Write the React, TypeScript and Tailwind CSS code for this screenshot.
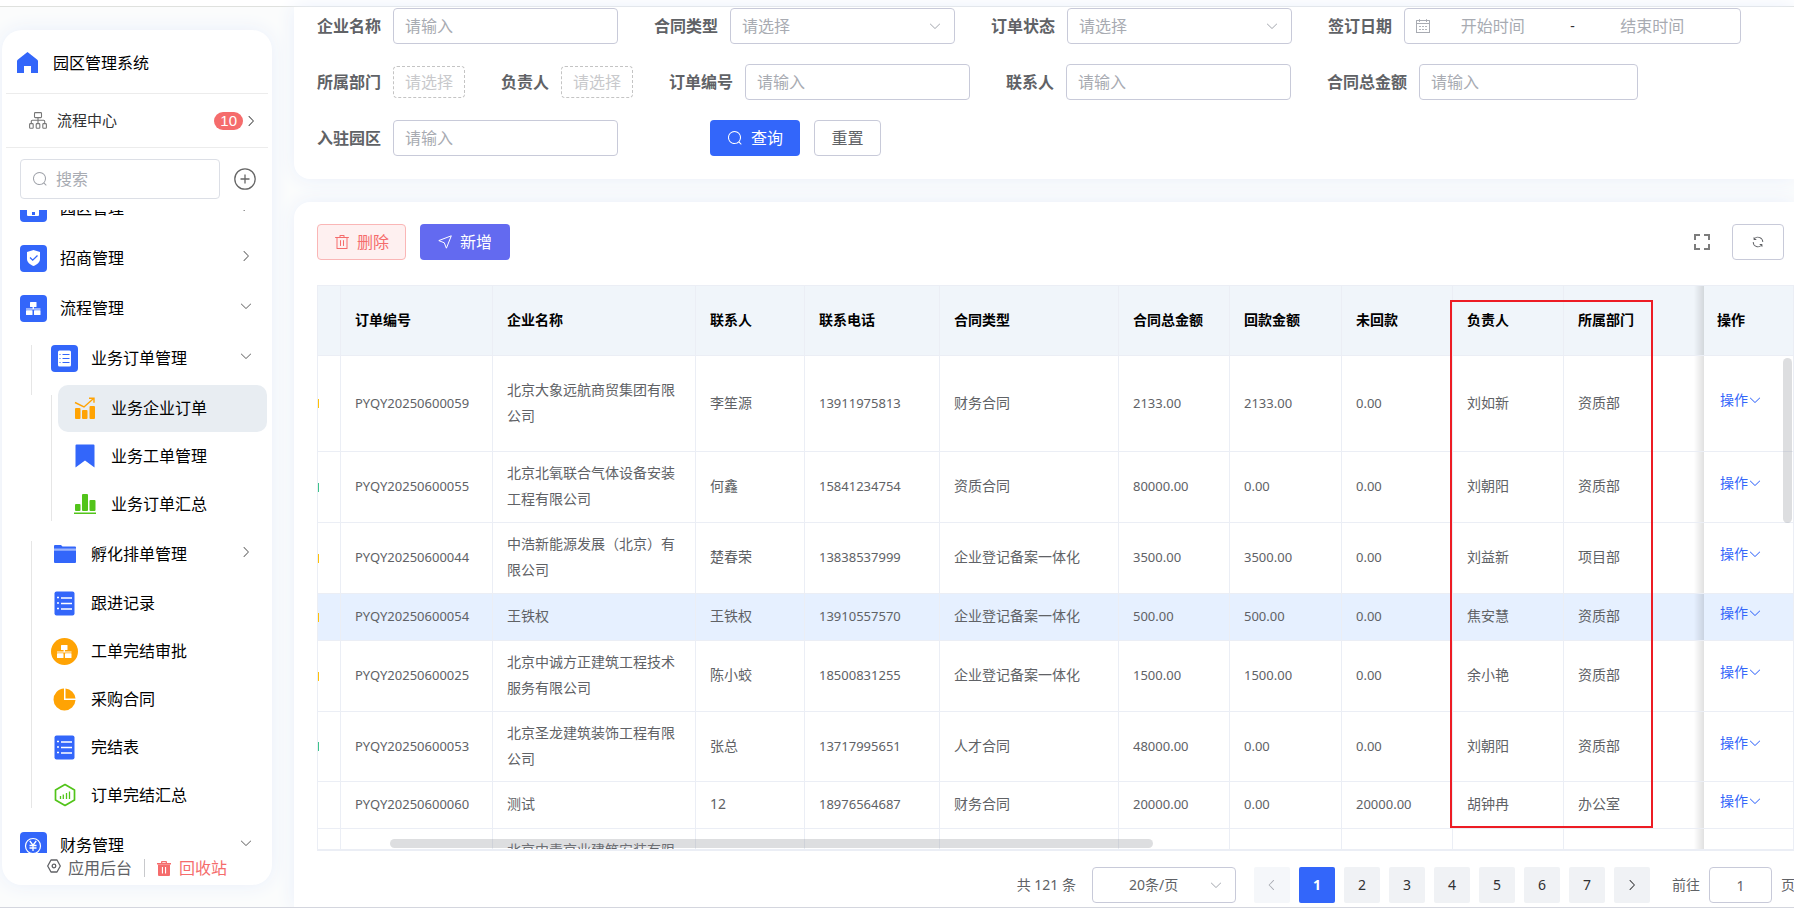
import { type ReactNode, useId, useState } from 'react'
import clsx from 'clsx'

const ICONS = {
  down: 'M831.872 340.864 512 652.672 192.128 340.864a30.592 30.592 0 0 0-42.752 0 29.12 29.12 0 0 0 0 41.6L489.664 714.24a32 32 0 0 0 44.672 0l340.288-331.712a29.12 29.12 0 0 0 0-41.728 30.592 30.592 0 0 0-42.752 0z',
  right:
    'M340.864 149.312a30.592 30.592 0 0 0 0 42.752L652.736 512 340.864 831.872a30.592 30.592 0 0 0 0 42.752 29.12 29.12 0 0 0 41.728 0L714.24 534.336a32 32 0 0 0 0-44.672L382.592 149.376a29.12 29.12 0 0 0-41.728 0z',
  left: 'M609.408 149.376 277.76 489.6a32 32 0 0 0 0 44.672l331.648 340.352a29.12 29.12 0 0 0 41.728 0 30.592 30.592 0 0 0 0-42.752L339.264 511.936l311.872-319.872a30.592 30.592 0 0 0 0-42.688 29.12 29.12 0 0 0-41.728 0z',
  search:
    'm795.904 750.72 124.992 124.928a32 32 0 0 1-45.248 45.248L750.656 795.904a416 416 0 1 1 45.248-45.248zM480 832a352 352 0 1 0 0-704 352 352 0 0 0 0 704',
  trash:
    'M160 256H96a32 32 0 0 1 0-64h256V95.936a32 32 0 0 1 32-32h256a32 32 0 0 1 32 32V192h256a32 32 0 1 1 0 64h-64v672a32 32 0 0 1-32 32H192a32 32 0 0 1-32-32zm448-64v-64H416v64zM224 896h576V256H224zm192-128a32 32 0 0 1-32-32V416a32 32 0 0 1 64 0v320a32 32 0 0 1-32 32m192 0a32 32 0 0 1-32-32V416a32 32 0 0 1 64 0v320a32 32 0 0 1-32 32',
  calendar:
    'M128 384v512h768V192H768v32a32 32 0 1 1-64 0v-32H320v32a32 32 0 0 1-64 0v-32H128v128h768v64zm192-256h384V96a32 32 0 1 1 64 0v32h160a32 32 0 0 1 32 32v768a32 32 0 0 1-32 32H96a32 32 0 0 1-32-32V160a32 32 0 0 1 32-32h160V96a32 32 0 0 1 64 0zm-32 384h64a32 32 0 0 1 0 64h-64a32 32 0 0 1 0-64m0 192h64a32 32 0 1 1 0 64h-64a32 32 0 1 1 0-64m192-192h64a32 32 0 0 1 0 64h-64a32 32 0 0 1 0-64m0 192h64a32 32 0 1 1 0 64h-64a32 32 0 1 1 0-64m192-192h64a32 32 0 1 1 0 64h-64a32 32 0 1 1 0-64m0 192h64a32 32 0 1 1 0 64h-64a32 32 0 1 1 0-64',
  refresh:
    'M771.776 794.88A384 384 0 0 1 128 512h64a320 320 0 0 0 555.712 216.448H654.72a32 32 0 1 1 0-64h149.056a32 32 0 0 1 32 32v148.928a32 32 0 1 1-64 0v-50.56zM276.288 295.616h92.992a32 32 0 0 1 0 64H220.16a32 32 0 0 1-32-32V178.56a32 32 0 0 1 64 0v50.56A384 384 0 0 1 896.128 512h-64a320 320 0 0 0-555.776-216.384z',
}

function Icon({ name, className }: { name: keyof typeof ICONS; className?: string }) {
  return (
    <svg viewBox="0 0 1024 1024" fill="currentColor" aria-hidden="true" className={clsx('shrink-0', className)}>
      <path d={ICONS[name]} />
    </svg>
  )
}

export default function App() {
  return (
    <div className="flex h-screen flex-col overflow-hidden bg-[#fbfcfc] text-base text-black font-['Noto_Sans','Noto_Sans_CJK_SC',sans-serif]">
      <div className="h-[7px] shrink-0 border-b border-[#dfe1de] bg-white" />
      <div className="flex min-h-0 flex-1">
        <Sidebar />
        <main className="ml-[22px] flex min-w-0 flex-1 flex-col gap-[23px]">
          <SearchPanel />
          <OrderPanel />
        </main>
      </div>
      <div className="h-px shrink-0 bg-[#d4d6de]" />
    </div>
  )
}

/* ---------- sidebar ---------- */

function Tile({ children }: { children: ReactNode }) {
  return (
    <svg viewBox="0 0 27 27" className="size-[27px]" aria-hidden="true">
      <rect width="27" height="27" rx="4" fill="#3366fa" />
      {children}
    </svg>
  )
}

function FlowShape() {
  return (
    <g fill="#fff">
      <rect x="10" y="7" width="6.500" height="5" rx=".5" />
      <path d="M12.600 12h1.300v1.500h6.600v1H6v-1h6.600z" />
      <rect x="6" y="15.300" width="6.500" height="4.700" rx=".5" />
      <rect x="14" y="15.300" width="6.500" height="4.700" rx=".5" />
    </g>
  )
}

const parkIcon = (
  <Tile>
    <path d="M8 7h11v13a1 1 0 0 1-1 1H8a1 1 0 0 1-1-1V7z" fill="#fff" />
    <path d="M11 12h5v2h-5zM12 17h3v3h-3z" fill="#3366fa" />
  </Tile>
)

const shieldIcon = (
  <Tile>
    <path d="M13.500 5 20 7v7c0 3.500-3 5.500-6.500 7C10 19.500 7 17.500 7 14V7z" fill="#fff" />
    <path d="m10 12.500 2.700 2.700 4.800-4.700" fill="none" stroke="#3366fa" strokeWidth="1.300" />
  </Tile>
)

const flowIcon = (
  <Tile>
    <FlowShape />
  </Tile>
)

const listIcon = (
  <Tile>
    <rect x="7" y="5.500" width="13" height="16" rx="1.500" fill="#fff" />
    <path d="M11.500 9.500h7M11.500 13.500h7M11.500 17.500h7M8.500 9.500h1M8.500 13.500h1M8.500 17.500h1" stroke="#3366fa" strokeWidth="1.200" />
  </Tile>
)

const yuanIcon = (
  <Tile>
    <circle cx="13" cy="14" r="7.500" fill="none" stroke="#fff" strokeWidth="1.200" />
    <path d="m9.800 9 3.200 4.200L16.200 9M13 13v6M9.500 13.500h7M9.500 16h7" fill="none" stroke="#fff" strokeWidth="1.300" />
  </Tile>
)

const trendIcon = (
  <svg viewBox="0 0 22 22" className="size-[22px]" aria-hidden="true">
    <g fill="#ffa304">
      <rect x="1" y="11" width="5.500" height="11" rx="1" />
      <rect x="8" y="13" width="5.500" height="9" rx="1" />
      <rect x="15.500" y="9" width="5.500" height="13" rx="1" />
    </g>
    <path d="M1 5.500 10 10l9-8M15 1.200h5v4.500" fill="none" stroke="#ffa304" strokeWidth="1.400" />
  </svg>
)

const bookmarkIcon = (
  <svg viewBox="0 0 20 24" className="h-6 w-5" aria-hidden="true">
    <path d="M.5 1.500a1 1 0 0 1 1-1h17a1 1 0 0 1 1 1v22L10 16.500.5 23.500z" fill="#3366fa" />
  </svg>
)

const barsIcon = (
  <svg viewBox="0 0 22 22" className="size-[22px]" fill="#52c41a" aria-hidden="true">
    <rect x="1" y="11" width="5.500" height="7" rx="1" />
    <rect x="8" y="1" width="6" height="17" rx="1" />
    <rect x="15.500" y="7" width="6" height="11" rx="1" />
    <rect x="0" y="19.500" width="22" height="1.500" />
  </svg>
)

const folderIcon = (
  <svg viewBox="0 0 22 18" className="h-[18px] w-[22px]" aria-hidden="true">
    <path d="M0 1a1 1 0 0 1 1-1h6l1.500 1.500H21a1 1 0 0 1 1 1V4H0z" fill="#3366fa" />
    <path d="M0 3.500h22v2H0z" fill="#9db5fc" />
    <path d="M0 5.500h22V17a1 1 0 0 1-1 1H1a1 1 0 0 1-1-1z" fill="#3366fa" />
  </svg>
)

const notesIcon = (
  <svg viewBox="0 0 21 25" className="h-[25px] w-[21px]" aria-hidden="true">
    <rect x=".5" y=".5" width="20" height="24" rx="2" fill="#3366fa" />
    <path d="M7 7h11M7 12.500h11M7 18h11M3 6.500h2M3 12h2M3 17.500h2" stroke="#fff" strokeWidth="1.600" />
  </svg>
)

const approveIcon = (
  <svg viewBox="0 0 27 27" className="size-[27px]" aria-hidden="true">
    <circle cx="13.500" cy="13.500" r="13.500" fill="#ffa304" />
    <FlowShape />
  </svg>
)

const pieIcon = (
  <svg viewBox="0 0 23 23" className="size-[23px]" fill="#ffa304" aria-hidden="true">
    <path d="M11 .5V12h11.500A11 11 0 1 1 11 .5z" />
    <path d="M12.500.5A11 11 0 0 1 22.500 10.500h-10z" />
  </svg>
)

const hexChartIcon = (
  <svg viewBox="0 0 22 24" className="h-6 w-[22px]" fill="none" stroke="#52c41a" aria-hidden="true">
    <path d="M11 1.500 20.500 7v10L11 22.500 1.500 17V7z" strokeWidth="1.700" strokeLinejoin="round" />
    <path d="M6.500 13v3M9.300 11.500V16M12.500 10v6M15.500 8.500V16" strokeWidth="1.300" />
  </svg>
)

function MenuItem({
  icon,
  label,
  arrow,
  active,
  level = 1,
}: {
  icon: ReactNode
  label: string
  arrow?: 'down' | 'right'
  active?: boolean
  level?: 1 | 2 | 3
}) {
  return (
    <li className={clsx('flex items-center', arrow || level === 1 ? 'h-[50px]' : 'h-12')}>
      <a
        href="#"
        aria-current={active ? 'page' : undefined}
        className={clsx(
          'flex h-[47px] flex-1 items-center gap-[13px] rounded-[10px] pr-[19px]',
          level === 3 && 'ml-1.5 mr-[5px] pl-[13px]',
          level === 2 && 'pl-[19px]',
          level === 1 && 'pl-[18px]',
          active && 'bg-[#e8edf2]',
        )}
      >
        <span className="grid w-[27px] shrink-0 place-items-center">{icon}</span>
        <span className="flex-1 whitespace-nowrap">{label}</span>
        {arrow && <Icon name={arrow} className="mb-1 size-3.5 text-[#666]" />}
      </a>
    </li>
  )
}

function Sidebar() {
  const [keyword, setKeyword] = useState('')

  return (
    <aside className="mb-[22px] ml-0.5 mt-[23px] flex w-[270px] shrink-0 flex-col overflow-hidden rounded-[20px] bg-white shadow-[0_0_20px_#e9effb]">
      <h1 className="mx-1 flex h-16 items-center gap-[15px] border-b border-[#ececec] pl-[11px] pt-0.5">
        <svg viewBox="0 0 21 21" className="size-[21px]" aria-hidden="true">
          <path d="M10.500 0 20 7.500c.6.500 1 1 1 1.800V21h-7v-7H7v7H0V9.300c0-.8.400-1.300 1-1.800z" fill="#3366fa" />
        </svg>
        园区管理系统
      </h1>
      <a href="#" className="mx-1 flex h-[54px] items-center border-b border-[#ececec] pl-[23px] pr-2.5 text-[15px] text-[#303133]">
        <svg viewBox="0 0 18 17" className="mr-2.5 h-[17px] w-[18px]" fill="none" stroke="#777" strokeWidth="1.100" aria-hidden="true">
          <rect x="5.500" y=".6" width="7" height="5" rx=".8" />
          <path d="M9 5.600v6M2.300 11.600V9.300a1 1 0 0 1 1-1h11.400a1 1 0 0 1 1 1v2.300" />
          <rect x=".6" y="11.600" width="3.600" height="4.600" rx=".8" />
          <rect x="7.200" y="11.600" width="3.600" height="4.600" rx=".8" />
          <rect x="13.800" y="11.600" width="3.600" height="4.600" rx=".8" />
        </svg>
        <span className="flex-1">流程中心</span>
        <span className="mr-px rounded-full bg-[#f56c6c] px-1.5 leading-[18px] text-white font-['Liberation_Sans',sans-serif]">10</span>
        <Icon name="right" className="size-3.5 text-[#444]" />
      </a>
      <div className="flex items-center gap-3.5 pb-[11px] pl-[18px] pt-[11px]">
        <div className="flex h-10 w-[200px] items-center gap-2 rounded border border-[#dcdfe6] px-[11px]">
          <Icon name="search" className="size-4 text-[#a0a3aa]" />
          <input
            aria-label="搜索"
            value={keyword}
            onChange={(e) => setKeyword(e.target.value)}
            placeholder="搜索"
            className="w-full min-w-0 outline-none placeholder:text-[#a8abb2]"
          />
        </div>
        <button type="button" aria-label="添加">
          <svg viewBox="0 0 22 22" className="size-[22px]" fill="none" stroke="#666" strokeWidth="1.300" aria-hidden="true">
            <circle cx="11" cy="11" r="10.200" />
            <path d="M11 6.500v9M6.500 11h9" />
          </svg>
        </button>
      </div>

      <nav className="min-h-0 flex-1 overflow-hidden">
        {/* 列表已向上滚动半行 */}
        <ul className="-mt-[27px]">
          <MenuItem icon={parkIcon} label="园区管理" arrow="right" />
          <MenuItem icon={shieldIcon} label="招商管理" arrow="right" />
          <MenuItem icon={flowIcon} label="流程管理" arrow="down" />
          <li>
            <div className="flex pl-[29px]">
              <span className="-mb-3 mt-3 w-px bg-[#e6e6e6]" />
              <ul className="flex-1">
                <MenuItem icon={listIcon} label="业务订单管理" arrow="down" level={2} />
              </ul>
            </div>
            <div className="flex pl-[49px]">
              <span className="mb-2 mt-3 w-px bg-[#e6e6e6]" />
              <ul className="flex-1 py-px">
                <MenuItem icon={trendIcon} label="业务企业订单" level={3} active />
                <MenuItem icon={bookmarkIcon} label="业务工单管理" level={3} />
                <MenuItem icon={barsIcon} label="业务订单汇总" level={3} />
              </ul>
            </div>
            <div className="flex pl-[29px]">
              <span className="my-3 w-px bg-[#e6e6e6]" />
              <ul className="flex-1 pb-px">
                <MenuItem icon={folderIcon} label="孵化排单管理" arrow="right" level={2} />
                <MenuItem icon={notesIcon} label="跟进记录" level={2} />
                <MenuItem icon={approveIcon} label="工单完结审批" level={2} />
                <MenuItem icon={pieIcon} label="采购合同" level={2} />
                <MenuItem icon={notesIcon} label="完结表" level={2} />
                <MenuItem icon={hexChartIcon} label="订单完结汇总" level={2} />
              </ul>
            </div>
          </li>
          <MenuItem icon={yuanIcon} label="财务管理" arrow="down" />
        </ul>
      </nav>

      <div className="flex h-8 shrink-0 items-start pl-[45px] leading-[30px]">
        <a href="#" className="flex items-center gap-[7px] text-[#606266]">
          <svg viewBox="0 0 14 14" className="mb-1 size-3.5" fill="none" stroke="currentColor" strokeWidth="1.300" aria-hidden="true">
            <path d="M4 1h6l3.300 6L10 13H4L.7 7z" strokeLinejoin="round" />
            <circle cx="7" cy="7" r="1.800" />
          </svg>
          应用后台
        </a>
        <span className="mx-3 mt-1.5 h-[18px] w-px bg-[#c8c9cc]" />
        <a href="#" className="flex items-center gap-2 text-[#f56c6c]">
          <svg viewBox="0 0 14 15" className="h-[15px] w-3.5" fill="currentColor" aria-hidden="true">
            <path fillRule="evenodd" d="M4 2V1a1 1 0 0 1 1-1h4a1 1 0 0 1 1 1v1h4v1.500H0V2zM5.300 2h3.400V1.200H5.300z" />
            <path fillRule="evenodd" d="M1 3.500h12V14a1 1 0 0 1-1 1H2a1 1 0 0 1-1-1zM4.900 6v6.500H6V6zM8 6v6.500h1.100V6z" />
          </svg>
          回收站
        </a>
      </div>
    </aside>
  )
}

/* ---------- search form ---------- */

const fieldBox = 'h-9 rounded border border-[#c8cad9] bg-white'
const labelText = 'mr-3 whitespace-nowrap font-semibold text-[#606266]'

function TextField({ label, width = 'w-[225px]' }: { label: string; width?: string }) {
  const id = useId()
  return (
    <div className="flex shrink-0 items-center">
      <label htmlFor={id} className={labelText}>
        {label}
      </label>
      <input id={id} placeholder="请输入" className={clsx(fieldBox, width, 'px-[11px] outline-none placeholder:text-[#a8abb2]')} />
    </div>
  )
}

function SelectField({ label }: { label: string }) {
  const id = useId()
  return (
    <div className="flex shrink-0 items-center">
      <label htmlFor={id} className={labelText}>
        {label}
      </label>
      <div className="relative">
        <select id={id} className={clsx(fieldBox, 'w-[225px] appearance-none px-[11px] text-[#a8abb2] outline-none')}>
          <option>请选择</option>
        </select>
        <Icon name="down" className="pointer-events-none absolute right-[13px] top-[11px] size-3.5 text-[#a8abb2]" />
      </div>
    </div>
  )
}

function PickerField({ label }: { label: string }) {
  const id = useId()
  return (
    <div className="flex shrink-0 items-center">
      <label htmlFor={id} className={labelText}>
        {label}
      </label>
      <button id={id} type="button" className="h-8 w-[72px] rounded border border-dashed border-[#c4c4c4] text-[#c8c9cc]">
        请选择
      </button>
    </div>
  )
}

function SearchPanel() {
  const startId = useId()
  return (
    <form
      onSubmit={(e) => e.preventDefault()}
      className="flex shrink-0 flex-col gap-5 overflow-hidden rounded-bl-[16px] bg-white pb-[23px] pl-[23px] pt-px shadow-[0_0_20px_#e9effb]"
    >
      <div className="flex items-center gap-9">
        <TextField label="企业名称" />
        <SelectField label="合同类型" />
        <SelectField label="订单状态" />
        <div className="flex shrink-0 items-center">
          <label htmlFor={startId} className={labelText}>
            签订日期
          </label>
          <div className={clsx(fieldBox, 'flex w-[337px] items-center pl-2.5 pr-[26px]')}>
            <Icon name="calendar" className="size-4 text-[#a8abb2]" />
            <input id={startId} placeholder="开始时间" className="min-w-0 flex-1 text-center outline-none placeholder:text-[#a8abb2]" />
            <span className="w-9 text-center text-sm text-[#303133]">-</span>
            <input aria-label="结束时间" placeholder="结束时间" className="min-w-0 flex-1 text-center outline-none placeholder:text-[#a8abb2]" />
          </div>
        </div>
      </div>
      <div className="flex items-center gap-9">
        <PickerField label="所属部门" />
        <PickerField label="负责人" />
        <TextField label="订单编号" />
        <TextField label="联系人" />
        <TextField label="合同总金额" width="w-[219px]" />
      </div>
      <div className="flex items-center">
        <TextField label="入驻园区" />
        <button type="submit" className="ml-[92px] flex h-9 w-[90px] items-center justify-center gap-2 rounded bg-[#3366fa] text-white">
          <Icon name="search" className="size-4" />
          查询
        </button>
        <button type="reset" className={clsx(fieldBox, 'ml-3.5 w-[67px] text-[#606266]')}>
          重置
        </button>
      </div>
    </form>
  )
}

/* ---------- order table ---------- */

interface Order {
  dot?: 'yellow' | 'green'
  no: string
  company: string
  contact: string
  phone: string
  type: string
  total: string
  paid: string
  unpaid: string
  owner: string
  dept: string
  height: string
  hover?: boolean
}

const orders: Order[] = [
  { dot: 'yellow', no: 'PYQY20250600059', company: '北京大象远航商贸集团有限公司', contact: '李笙源', phone: '13911975813', type: '财务合同', total: '2133.00', paid: '2133.00', unpaid: '0.00', owner: '刘如新', dept: '资质部', height: 'h-24' },
  { dot: 'green', no: 'PYQY20250600055', company: '北京北氧联合气体设备安装工程有限公司', contact: '何鑫', phone: '15841234754', type: '资质合同', total: '80000.00', paid: '0.00', unpaid: '0.00', owner: '刘朝阳', dept: '资质部', height: 'h-[71px]' },
  { dot: 'yellow', no: 'PYQY20250600044', company: '中浩新能源发展（北京）有限公司', contact: '楚春荣', phone: '13838537999', type: '企业登记备案一体化', total: '3500.00', paid: '3500.00', unpaid: '0.00', owner: '刘益新', dept: '项目部', height: 'h-[71px]' },
  { dot: 'yellow', no: 'PYQY20250600054', company: '王铁权', contact: '王铁权', phone: '13910557570', type: '企业登记备案一体化', total: '500.00', paid: '500.00', unpaid: '0.00', owner: '焦安慧', dept: '资质部', height: 'h-[47px]', hover: true },
  { dot: 'yellow', no: 'PYQY20250600025', company: '北京中诚方正建筑工程技术服务有限公司', contact: '陈小蛟', phone: '18500831255', type: '企业登记备案一体化', total: '1500.00', paid: '1500.00', unpaid: '0.00', owner: '余小艳', dept: '资质部', height: 'h-[71px]' },
  { dot: 'green', no: 'PYQY20250600053', company: '北京圣龙建筑装饰工程有限公司', contact: '张总', phone: '13717995651', type: '人才合同', total: '48000.00', paid: '0.00', unpaid: '0.00', owner: '刘朝阳', dept: '资质部', height: 'h-[70px]' },
  { no: 'PYQY20250600060', company: '测试', contact: '12', phone: '18976564687', type: '财务合同', total: '20000.00', paid: '0.00', unpaid: '20000.00', owner: '胡钟冉', dept: '办公室', height: 'h-[47px]' },
  { no: '', company: '北京中青京业建筑安装有限公司', contact: '', phone: '', type: '', total: '', paid: '', unpaid: '', owner: '', dept: '', height: 'h-[71px]' },
]

const columns = [
  { title: '', width: 'w-[23px]' },
  { title: '订单编号', width: 'w-[152px]' },
  { title: '企业名称', width: 'w-[203px]' },
  { title: '联系人', width: 'w-[109px]' },
  { title: '联系电话', width: 'w-[135px]' },
  { title: '合同类型', width: 'w-[179px]' },
  { title: '合同总金额', width: 'w-[111px]' },
  { title: '回款金额', width: 'w-[112px]' },
  { title: '未回款', width: 'w-[111px]' },
  { title: '负责人', width: 'w-[111px]' },
  { title: '所属部门', width: 'w-[140px]' },
]

const cell = 'border-b border-r border-[#ebeef5] pb-0.5 pl-3.5 pr-3'
const numCell = clsx(cell, 'text-[13px]')
// 固定列，左侧带渐变阴影
const fixedCell =
  "sticky right-0 border-b border-r border-[#ebeef5] before:absolute before:inset-y-0 before:-left-2.5 before:w-2.5 before:bg-linear-to-l before:from-black/12 before:to-transparent before:content-['']"

function OrderTable() {
  return (
    <div className="relative ml-[23px] min-h-0 flex-1 border-b-2 border-[#ebeef5]">
      <div className="h-full overflow-hidden">
        <table className="w-full table-fixed border-separate border-spacing-0 border-l border-t border-[#ebeef5] text-sm leading-[26px] text-[#606266]">
          <colgroup>
            {columns.map((c) => (
              <col key={c.title} className={c.width} />
            ))}
            <col />
          </colgroup>
          <thead>
            <tr className="h-[70px] bg-[#f0f5fa] text-left text-black">
              {columns.map((c, i) => (
                <th key={c.title} className={clsx(cell, 'font-semibold', i === 10 && 'border-r-0')}>
                  {c.title}
                </th>
              ))}
              <th className={clsx(fixedCell, 'bg-[#f0f5fa] pb-0.5 pl-[13px] font-semibold')}>操作</th>
            </tr>
          </thead>
          <tbody>
            {orders.map((o, i) => (
              <tr key={i} className={clsx(o.height, o.hover && 'bg-[#e6f0ff]')}>
                <td className="border-b border-r border-[#ebeef5]">
                  {o.dot && (
                    <span className={clsx('block h-[9px] w-px', o.dot === 'yellow' ? 'bg-[#ffc107]' : 'bg-[#3cc38b]')} />
                  )}
                </td>
                <td className={numCell}>{o.no}</td>
                <td className={cell}>{o.company}</td>
                <td className={cell}>{o.contact}</td>
                <td className={numCell}>{o.phone}</td>
                <td className={cell}>{o.type}</td>
                <td className={numCell}>{o.total}</td>
                <td className={numCell}>{o.paid}</td>
                <td className={numCell}>{o.unpaid}</td>
                <td className={cell}>{o.owner}</td>
                <td className={clsx(cell, 'border-r-0')}>{o.dept}</td>
                <td className={clsx(fixedCell, 'pb-2 pl-4', o.hover ? 'bg-[#e6f0ff]' : 'bg-white')}>
                  {o.no && (
                    <button type="button" className="flex items-center text-[#3366fa]">
                      操作
                      <Icon name="down" className="size-3.5" />
                    </button>
                  )}
                </td>
              </tr>
            ))}
          </tbody>
        </table>
      </div>
      {/* 浮动滚动条 */}
      <span className="absolute bottom-px left-[73px] h-[9px] w-[763px] rounded-full bg-[#909399]/30" />
      <span className="absolute right-0.5 top-[73px] h-[165px] w-[9px] rounded-full bg-[#909399]/30" />
      {/* 负责人与所属部门标注 */}
      <span className="pointer-events-none absolute left-[1133px] top-[15px] h-[528px] w-[203px] border-2 border-[#ed1c24]" />
    </div>
  )
}

function Pagination() {
  const jumpId = useId()
  const [page, setPage] = useState(1)
  const pageBtn = 'grid size-9 shrink-0 place-items-center rounded-[2px]'

  return (
    <div className="flex shrink-0 items-center justify-end overflow-hidden pb-1 pt-4 text-sm text-[#606266]">
      <span className="whitespace-nowrap">共 121 条</span>
      <div className="relative ml-4 mr-[18px]">
        <select aria-label="每页条数" className={clsx(fieldBox, 'w-[144px] appearance-none pl-9 outline-none')}>
          <option>20条/页</option>
        </select>
        <Icon name="down" className="pointer-events-none absolute right-[13px] top-[11px] size-3.5 text-[#a8abb2]" />
      </div>
      <div className="flex gap-[9px] text-[#303133]">
        <button type="button" aria-label="上一页" disabled className={clsx(pageBtn, 'bg-[#f5f7fa] text-[#a8abb2]')}>
          <Icon name="left" className="size-3.5" />
        </button>
        {[1, 2, 3, 4, 5, 6, 7].map((n) => (
          <button
            key={n}
            type="button"
            onClick={() => setPage(n)}
            className={clsx(pageBtn, n === page ? 'bg-[#3366fa] font-bold text-white' : 'bg-[#f0f2f5]')}
          >
            {n}
          </button>
        ))}
        <button type="button" aria-label="下一页" className={clsx(pageBtn, 'bg-[#f0f2f5]')}>
          <Icon name="right" className="size-3.5" />
        </button>
      </div>
      <label htmlFor={jumpId} className="ml-[22px] mr-[9px] whitespace-nowrap">
        前往
      </label>
      <input id={jumpId} defaultValue="1" className={clsx(fieldBox, 'w-[63px] text-center outline-none')} />
      <span className="-mr-px ml-[9px] whitespace-nowrap">页</span>
    </div>
  )
}

function OrderPanel() {
  return (
    <section className="flex min-h-0 flex-1 flex-col rounded-tl-[16px] bg-white shadow-[0_0_20px_#e9effb]">
      <div className="flex items-center pb-[25px] pl-[23px] pr-2.5 pt-[22px]">
        <button type="button" className="flex h-9 w-[89px] items-center justify-center gap-[7px] rounded border border-[#fab6b6] bg-[#fef0f0] text-[#f56c6c]">
          <Icon name="trash" className="size-4" />
          删除
        </button>
        <button type="button" className="ml-3.5 flex h-9 w-[90px] items-center justify-center gap-2 rounded bg-[#636af0] text-white">
          <svg viewBox="0 0 14 14" className="size-3.5" fill="none" stroke="currentColor" aria-hidden="true">
            <path d="M13.300.8.800 5.600l5.500 2.200 2.100 5.400z" strokeLinejoin="round" />
          </svg>
          新增
        </button>
        <button type="button" aria-label="全屏" className="ml-auto mr-[22px]">
          <svg viewBox="0 0 16 16" className="size-4" fill="none" stroke="#7c7c7c" strokeWidth="2" aria-hidden="true">
            <path d="M1 6V1h5M10 1h5v5M15 10v5h-5M6 15H1v-5" />
          </svg>
        </button>
        <button type="button" aria-label="刷新" className={clsx(fieldBox, 'grid w-[52px] place-items-center text-[#606266]')}>
          <Icon name="refresh" className="size-3.5" />
        </button>
      </div>
      <OrderTable />
      <Pagination />
    </section>
  )
}
